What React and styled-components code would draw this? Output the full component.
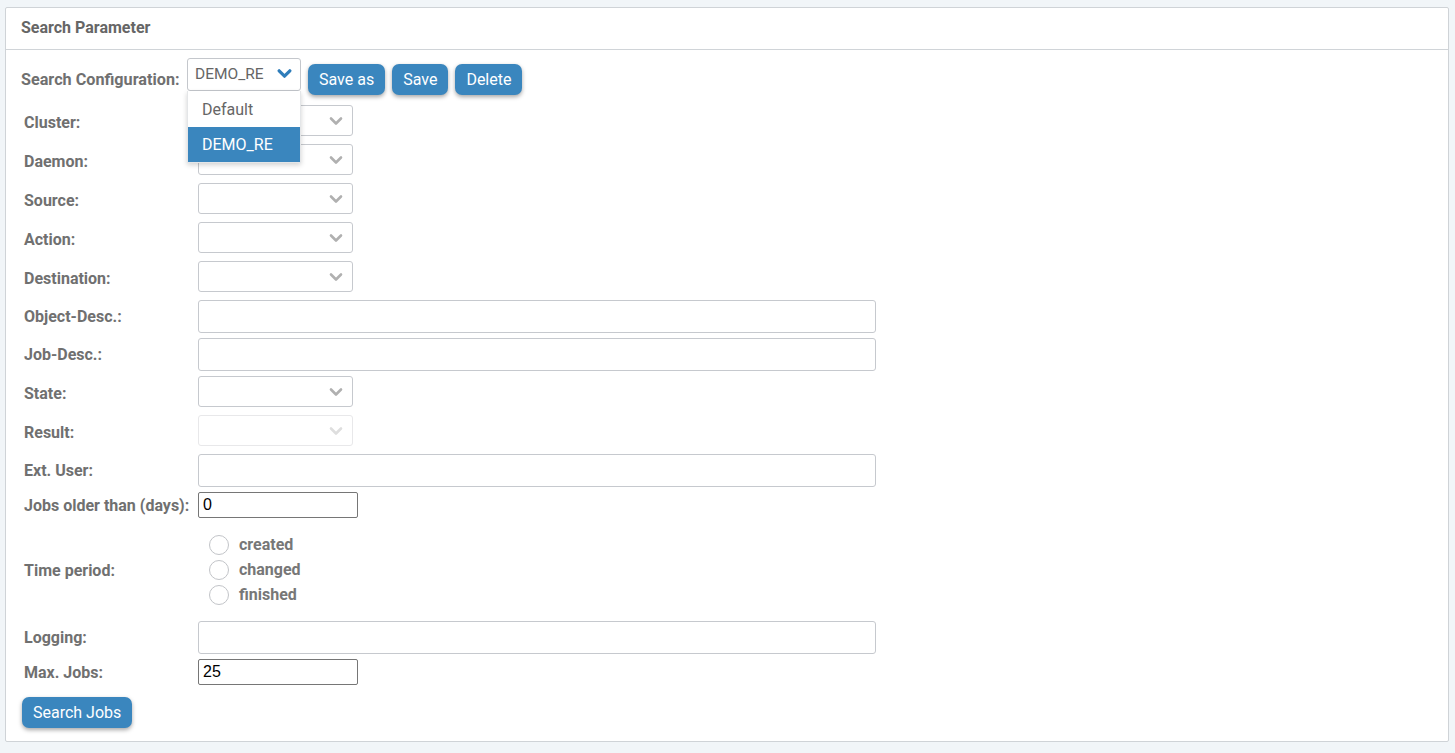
import React from "react";
import styled, { createGlobalStyle } from "styled-components";

const GlobalStyle = createGlobalStyle`
  html, body {
    margin: 0;
    padding: 0;
    background: #f1f5f8;
    font-family: "Roboto", "Liberation Sans", sans-serif;
  }
`;

const Page = styled.div`
  padding: 7px 6px 11px 5px;
`;

const Panel = styled.div`
  background: #ffffff;
  border: 1px solid #cfd3d7;
  border-radius: 2px;
`;

const PanelHeader = styled.div`
  height: 42px;
  display: flex;
  align-items: center;
  padding: 0 0 2px 15px;
  box-sizing: border-box;
  border-bottom: 1px solid #d0d4d8;
  font-size: 16px;
  font-weight: 700;
  color: #666;
`;

const PanelBody = styled.div`
  padding: 0 0 13px 0;
`;

const ConfigRow = styled.div`
  display: flex;
  align-items: flex-start;
  padding: 8px 0 6px 15px;
`;

const ConfigLabel = styled.div`
  font-size: 16.2px;
  font-weight: 700;
  color: #707070;
  line-height: 20px;
  margin-top: 12px;
  width: 166px;
  white-space: nowrap;
`;

const ConfigSelectWrap = styled.div`
  position: relative;
  width: 114px;
  margin-right: 7px;
`;

const ConfigSelect = styled.div`
  box-sizing: border-box;
  height: 33px;
  border: 1px solid #c4c7cc;
  border-radius: 3px;
  display: flex;
  align-items: center;
  justify-content: space-between;
  padding: 0 8px 2px 7px;
  font-size: 15.5px;
  color: #666;
`;

const Menu = styled.div`
  position: absolute;
  top: 100%;
  left: 0;
  width: 100%;
  background: #fff;
  box-shadow: 0 2px 5px rgba(0, 0, 0, 0.18);
  border: 1px solid #e4e6e8;
  border-top: none;
  box-sizing: border-box;
  z-index: 10;
`;

const MenuItem = styled.div`
  height: ${(p) => (p.active ? 35 : 36)}px;
  display: flex;
  align-items: center;
  padding-left: 14px;
  font-size: 16px;
  color: ${(p) => (p.active ? "#fff" : "#666")};
  background: ${(p) => (p.active ? "#3a86be" : "#fff")};
`;

const Button = styled.button`
  height: 31px;
  margin-top: ${(p) => p.top || 0}px;
  margin-right: 7px;
  padding: 0 11px;
  border: none;
  border-radius: 7px;
  background: #3a86be;
  color: #fff;
  font-family: "Roboto", "Liberation Sans", sans-serif;
  font-size: 16px;
  box-shadow: 0 2px 4px rgba(0, 0, 0, 0.35);
  cursor: pointer;
`;

const Row = styled.div`
  display: flex;
  align-items: center;
  padding: ${(p) => p.pad || "4px 0 4px 0"};
  padding-left: 18px;
`;

const Label = styled.div`
  width: 174px;
  flex-shrink: 0;
  padding-top: ${(p) => p.drop || 0}px;
  font-size: 16px;
  font-weight: 700;
  color: #707070;
  white-space: nowrap;
`;

const SelectBox = styled.div`
  box-sizing: border-box;
  width: 155px;
  height: 31px;
  border: 1px solid ${(p) => (p.disabled ? "#e8e8ea" : "#c6c9ce")};
  border-radius: 3px;
  display: flex;
  align-items: center;
  justify-content: flex-end;
  padding-right: 9px;
`;

const TextBox = styled.div`
  box-sizing: border-box;
  width: 678px;
  height: 33px;
  border: 1px solid #c6c9ce;
  border-radius: 3px;
`;

const NativeInput = styled.input`
  box-sizing: border-box;
  width: 160px;
  height: 26px;
  border: 1px solid #767676;
  border-radius: 2px;
  padding: 0 4px;
  font-family: "Liberation Sans", Arial, sans-serif;
  font-size: 16px;
  color: #000;
`;

const RadioGroup = styled.div`
  display: flex;
  flex-direction: column;
  padding-left: 11px;
`;

const RadioItem = styled.label`
  display: flex;
  align-items: center;
  height: 25px;
  font-size: 16px;
  font-weight: 700;
  color: #777;
`;

const RadioCircle = styled.span`
  box-sizing: border-box;
  width: 20px;
  height: 20px;
  border: 1px solid #c2c4c8;
  border-radius: 50%;
  margin-right: 10px;
`;

const Footer = styled.div`
  padding: 8px 0 0 16px;
`;

const Chevron = ({ color = "#b0b0b0", size = 14, width = 2.6 }) => (
  <svg width={size} height={size} viewBox="0 0 14 14">
    <polyline
      points="2,4.5 7,9.5 12,4.5"
      fill="none"
      stroke={color}
      strokeWidth={width}
      strokeLinecap="round"
      strokeLinejoin="round"
    />
  </svg>
);

const selectRow = (label, disabled) => (
  <Row key={label}>
    <Label drop={3}>{label}</Label>
    <SelectBox disabled={disabled}>
      <Chevron color={disabled ? "#dedede" : "#b0b0b0"} />
    </SelectBox>
  </Row>
);

const textRow = (label) => (
  <Row key={label} pad="4px 0 1px 0">
    <Label>{label}</Label>
    <TextBox />
  </Row>
);

export default function App() {
  return (
    <Page>
      <GlobalStyle />
      <Panel>
        <PanelHeader>Search Parameter</PanelHeader>
        <PanelBody>
          <ConfigRow>
            <ConfigLabel>Search Configuration:</ConfigLabel>
            <ConfigSelectWrap>
              <ConfigSelect>
                <span>DEMO_RE</span>
                <Chevron color="#2f7dba" size={15} width={3} />
              </ConfigSelect>
              <Menu>
                <MenuItem>Default</MenuItem>
                <MenuItem active>DEMO_RE</MenuItem>
              </Menu>
            </ConfigSelectWrap>
            <Button top={6}>Save as</Button>
            <Button top={6}>Save</Button>
            <Button top={6}>Delete</Button>
          </ConfigRow>

          {selectRow("Cluster:")}
          {selectRow("Daemon:")}
          {selectRow("Source:")}
          {selectRow("Action:")}
          {selectRow("Destination:")}
          {textRow("Object-Desc.:")}
          {textRow("Job-Desc.:")}
          {selectRow("State:")}
          {selectRow("Result:", true)}
          {textRow("Ext. User:")}

          <Row pad="4px 0 4px 0">
            <Label>Jobs older than (days):</Label>
            <NativeInput defaultValue="0" />
          </Row>

          <Row pad="10px 0 10px 0">
            <Label drop={2}>Time period:</Label>
            <RadioGroup>
              <RadioItem>
                <RadioCircle />
                created
              </RadioItem>
              <RadioItem>
                <RadioCircle />
                changed
              </RadioItem>
              <RadioItem>
                <RadioCircle />
                finished
              </RadioItem>
            </RadioGroup>
          </Row>

          {textRow("Logging:")}

          <Row pad="4px 0 4px 0">
            <Label>Max. Jobs:</Label>
            <NativeInput defaultValue="25" />
          </Row>

          <Footer>
            <Button>Search Jobs</Button>
          </Footer>
        </PanelBody>
      </Panel>
    </Page>
  );
}
